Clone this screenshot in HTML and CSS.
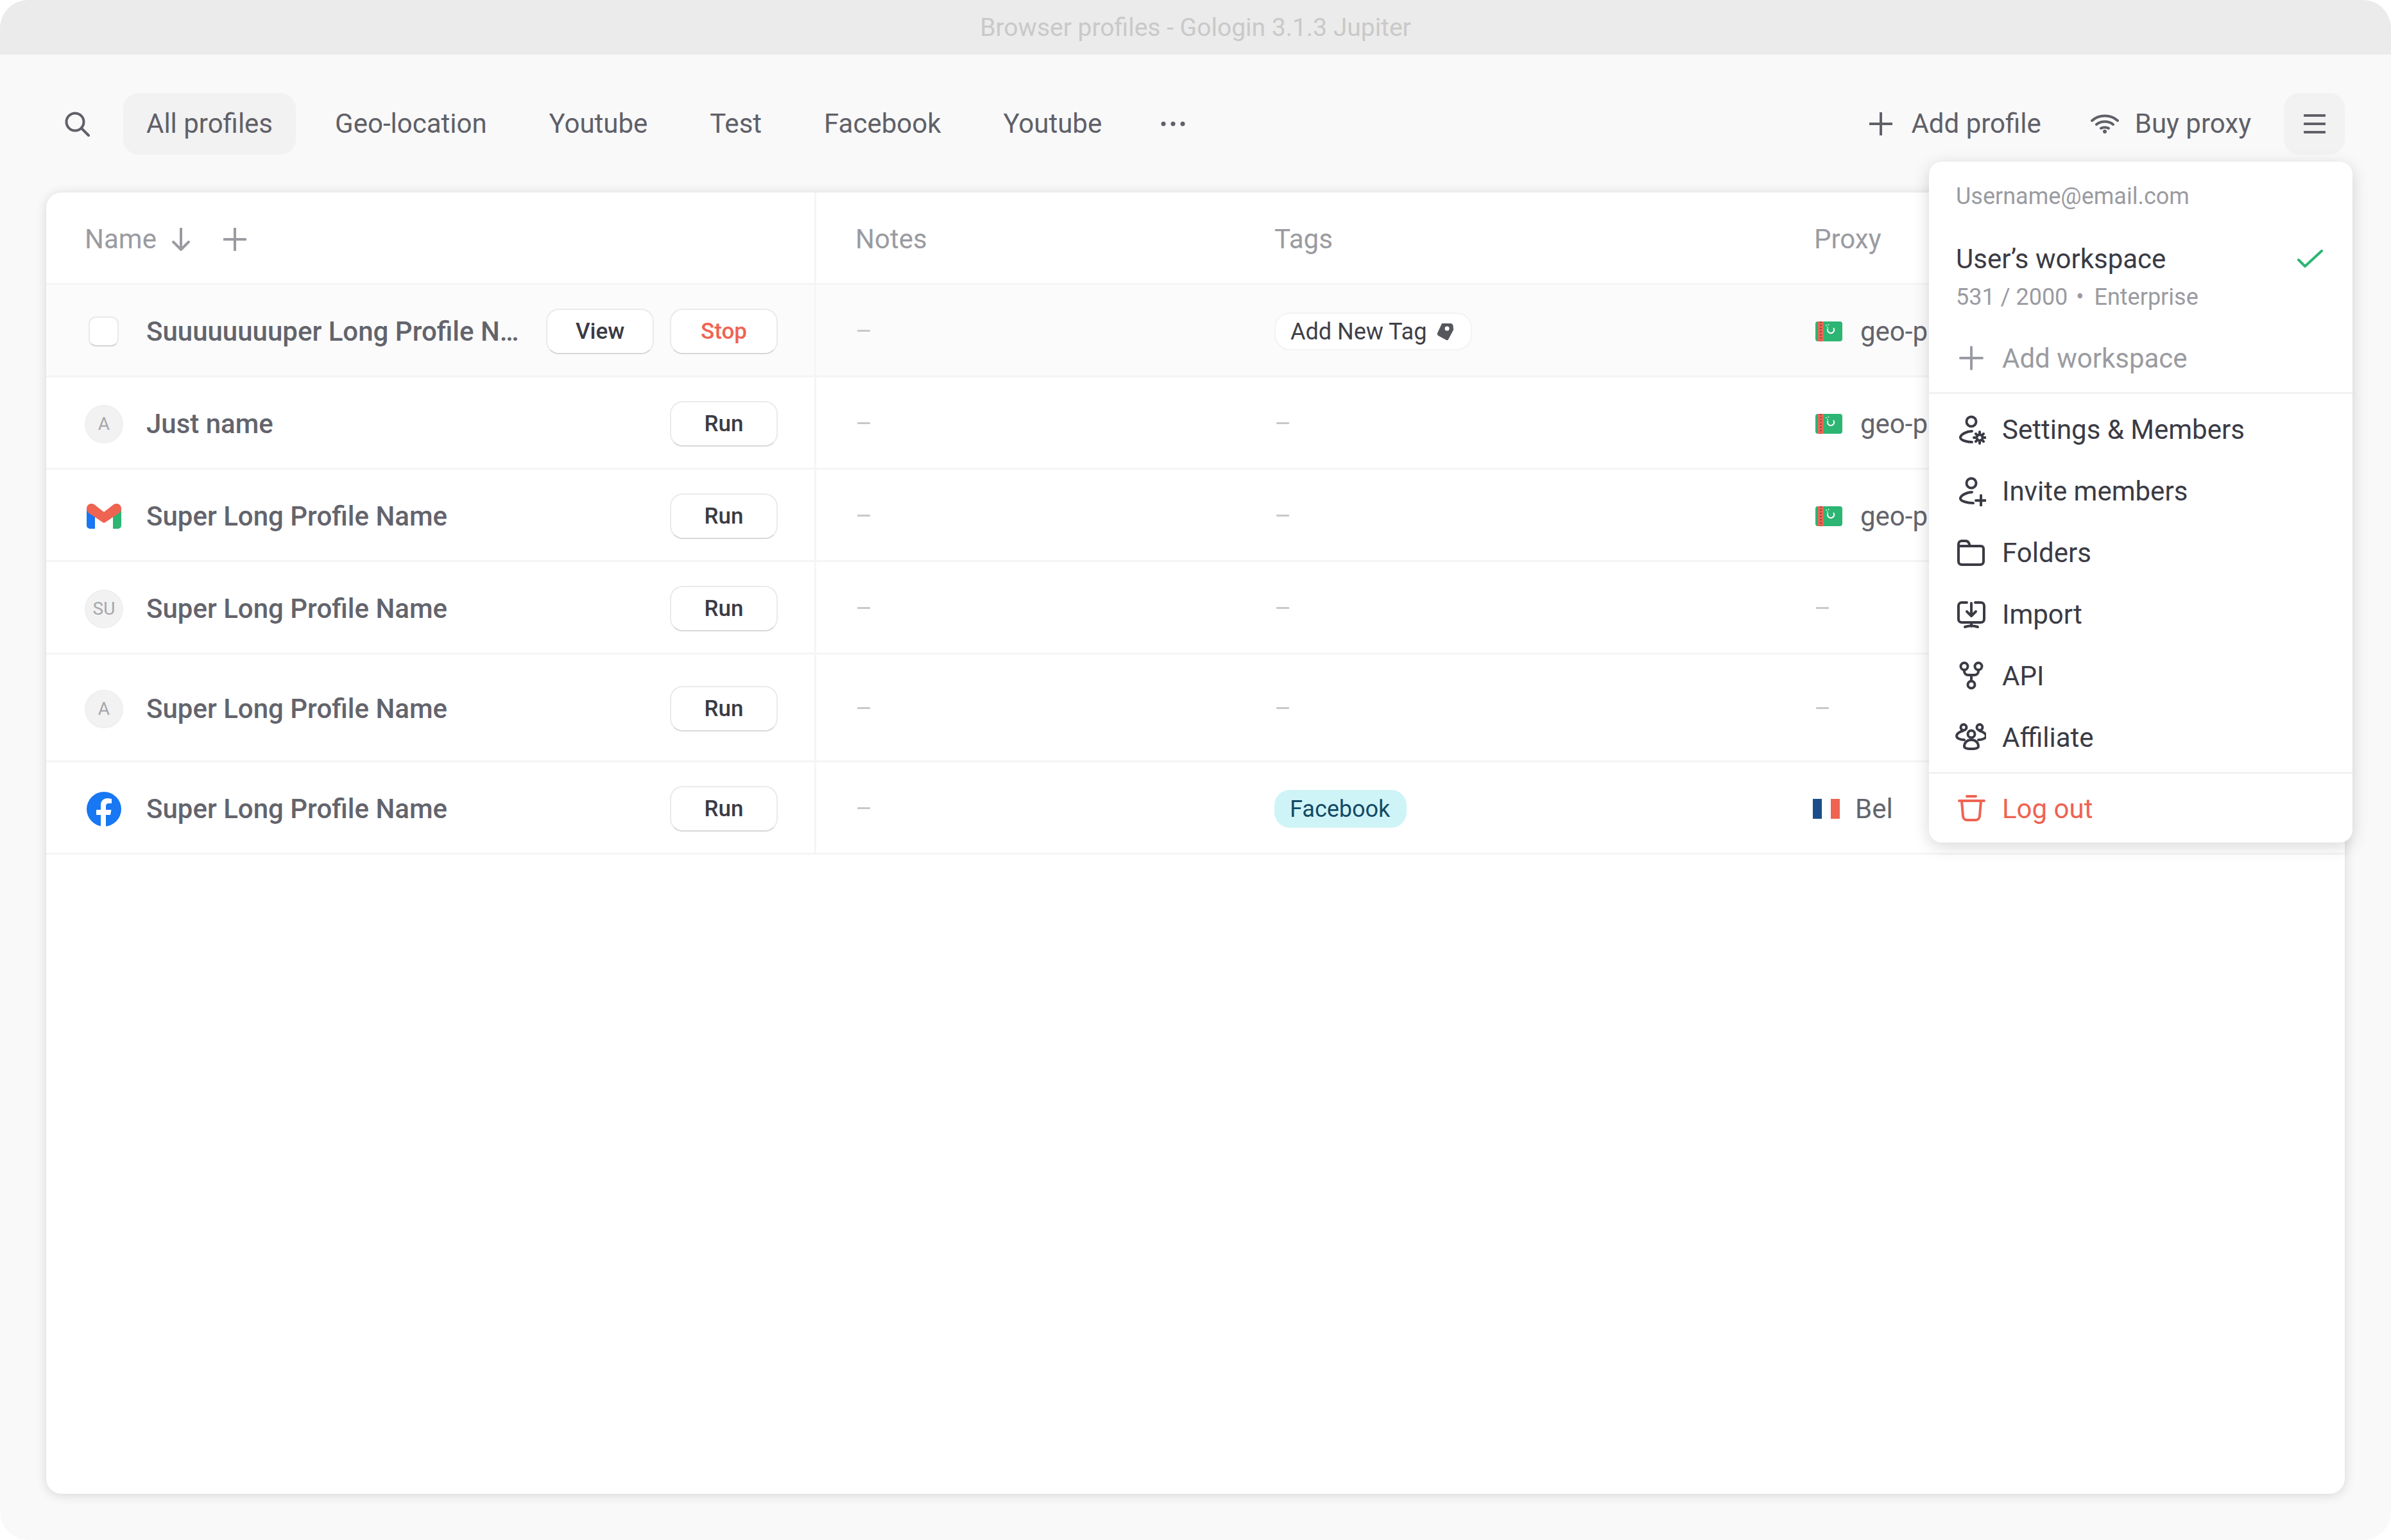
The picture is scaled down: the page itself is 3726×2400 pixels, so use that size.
FILE: index.html
```html
<!DOCTYPE html>
<html lang="en">
<head>
    <meta charset="UTF-8">
    <title>Browser profiles - Gologin 3.1.3 Jupiter</title>
    <link rel="stylesheet" href="styles.css">
</head>
<body>
<svg class="sprite">
    <symbol id="flag-tm" viewBox="0 0 42 31">
        <rect width="42" height="31" rx="4" fill="#2cb573"/>
        <rect x="4" width="9" height="31" fill="#ee6352"/>
        <path d="M8.500 0v31" stroke="#8c4a4a" stroke-width="3" stroke-dasharray="2 3"/>
        <path d="M19.500 11a5 5 0 1 0 8.500-1" fill="none" stroke="#fff" stroke-width="2"/>
        <circle cx="17" cy="6" r="1" fill="#dff3ea"/>
        <circle cx="20.500" cy="5" r="1" fill="#dff3ea"/>
        <circle cx="19" cy="9" r="1" fill="#dff3ea"/>
    </symbol>
</svg>
<div class="window">
    <div class="titlebar">Browser profiles - Gologin 3.1.3 Jupiter</div>

    <div class="toolbar">
        <svg class="search-icon" width="40" height="40" viewBox="0 0 40 40"><circle cx="17" cy="17" r="13.5"/><path d="M27 27l11 11"/></svg>
        <div class="tab active">All profiles</div>
        <div class="tab">Geo-location</div>
        <div class="tab">Youtube</div>
        <div class="tab">Test</div>
        <div class="tab">Facebook</div>
        <div class="tab">Youtube</div>
        <svg class="more-icon" width="38" height="8" viewBox="0 0 38 8"><circle cx="4" cy="4" r="3.5"/><circle cx="19" cy="4" r="3.5"/><circle cx="34" cy="4" r="3.5"/></svg>

        <div class="action add-profile">
            <svg class="line-icon" width="36" height="36" viewBox="0 0 36 36"><path d="M18 0v36M0 18h36"/></svg>
            Add profile
        </div>
        <div class="action buy-proxy">
            <svg class="line-icon" width="44" height="30" viewBox="0 0 44 30"><path d="M2 10c11-10 29-10 40 0M9 16c7-6 19-6 26 0M16 22c3-2 9-2 12 0"/><circle class="dot" cx="22" cy="27" r="3"/></svg>
            Buy proxy
        </div>
        <div class="burger">
            <svg class="line-icon" width="34" height="30" viewBox="0 0 34 30"><path d="M1 2h32M1 15h32M1 28h32"/></svg>
        </div>
    </div>

    <div class="card">
        <div class="row head">
            <div class="cell name-cell">
                <span class="head-name">Name</span>
                <svg class="head-icon" width="28" height="36" viewBox="0 0 28 36"><path d="M14 0v34M2 22l12 12 12-12"/></svg>
                <svg class="head-icon" width="36" height="36" viewBox="0 0 36 36"><path d="M18 1v34M1 18h34"/></svg>
            </div>
            <div class="cell notes-cell">Notes</div>
            <div class="cell">Tags</div>
            <div class="cell">Proxy</div>
        </div>

        <div class="row hovered">
            <div class="cell name-cell">
                <div class="check"></div>
                <div class="name">Suuuuuuuuper Long Profile N…</div>
                <button class="btn view">View</button>
                <button class="btn stop">Stop</button>
            </div>
            <div class="cell notes-cell dash">–</div>
            <div class="cell"><span class="tag add-tag">Add New Tag
                <svg width="26" height="28" viewBox="0 0 26 28"><path fill-rule="evenodd" d="M8 1h13q4 0 4.500 4l.5 6-8 15q-1 2-3 1L2 20q-2-2-1-4zm8 4.500a3.500 3.500 0 1 0 0 7 3.500 3.500 0 0 0 0-7z"/></svg>
            </span></div>
            <div class="cell proxy">
                <svg class="flag" width="42" height="31"><use href="#flag-tm"/></svg>
                geo-proxy
            </div>
        </div>

        <div class="row">
            <div class="cell name-cell">
                <div class="avatar">A</div>
                <div class="name">Just name</div>
                <button class="btn">Run</button>
            </div>
            <div class="cell notes-cell dash">–</div>
            <div class="cell dash">–</div>
            <div class="cell proxy">
                <svg class="flag" width="42" height="31"><use href="#flag-tm"/></svg>
                geo-proxy
            </div>
        </div>

        <div class="row">
            <div class="cell name-cell">
                <svg class="avatar-icon" width="60" height="60" viewBox="0 0 60 60">
                    <path d="M3 18h13v31H8a5 5 0 0 1-5-5z" fill="#1877f2"/>
                    <path d="M57 18H44v31h8a5 5 0 0 0 5-5z" fill="#2cb573"/>
                    <path d="M3 18c0-8 8-10 13-6l14 11 14-11c5-4 13-2 13 6 0 3-1 5-4 7L32 39c-1 1-3 1-4 0L7 25c-3-2-4-4-4-7z" fill="#ee6352"/>
                </svg>
                <div class="name">Super Long Profile Name</div>
                <button class="btn">Run</button>
            </div>
            <div class="cell notes-cell dash">–</div>
            <div class="cell dash">–</div>
            <div class="cell proxy">
                <svg class="flag" width="42" height="31"><use href="#flag-tm"/></svg>
                geo-proxy
            </div>
        </div>

        <div class="row">
            <div class="cell name-cell">
                <div class="avatar">SU</div>
                <div class="name">Super Long Profile Name</div>
                <button class="btn">Run</button>
            </div>
            <div class="cell notes-cell dash">–</div>
            <div class="cell dash">–</div>
            <div class="cell dash">–</div>
        </div>

        <div class="row tall">
            <div class="cell name-cell">
                <div class="avatar">A</div>
                <div class="name">Super Long Profile Name</div>
                <button class="btn">Run</button>
            </div>
            <div class="cell notes-cell dash">–</div>
            <div class="cell dash">–</div>
            <div class="cell dash">–</div>
        </div>

        <div class="row">
            <div class="cell name-cell">
                <svg class="avatar-icon" width="60" height="60" viewBox="0 0 60 60">
                    <circle cx="30" cy="30" r="27" fill="#1877f2"/>
                    <path d="M33 57V39h7l1.500-8H33v-5c0-3 1-5 5-5h4v-7c-2 0-4-1-6-1-7 0-11 4-11 11v7h-7v8h7v18z" fill="#fff"/>
                </svg>
                <div class="name">Super Long Profile Name</div>
                <button class="btn">Run</button>
            </div>
            <div class="cell notes-cell dash">–</div>
            <div class="cell"><span class="tag fb-tag">Facebook</span></div>
            <div class="cell proxy">
                <svg class="flag fr" width="42" height="31" viewBox="0 0 42 31"><rect width="14" height="31" fill="#1a4e8a"/><rect x="14" width="14" height="31" fill="#fff"/><rect x="28" width="14" height="31" fill="#ee6352"/></svg>
                Bel
            </div>
        </div>
    </div>

    <div class="menu">
        <div class="menu-email">Username@email.com</div>
        <div class="workspace">
            <div class="workspace-name">User’s workspace
                <svg class="tick" width="40" height="28" viewBox="0 0 40 28"><path d="M2 16l10 10L38 2"/></svg>
            </div>
            <div class="workspace-sub">531 / 2000<span class="sep">•</span>Enterprise</div>
        </div>
        <div class="item muted">
            <svg class="item-icon" width="48" height="48" viewBox="0 0 48 48"><path d="M25 7v34M8 24h34"/></svg>
            Add workspace
        </div>
        <div class="divider first"></div>
        <div class="item">
            <svg class="item-icon" width="48" height="48" viewBox="0 0 48 48"><circle cx="25" cy="12" r="7.500"/><path d="M26 27c-8 0-18 5-18 10 0 4 10 7 18 7"/><circle cx="38" cy="37" r="4.500"/><path d="M38 28v3M38 43v3M29 37h3M44 37h3M32 31l2 2M42 41l2 2M44 31l-2 2M34 41l-2 2"/></svg>
            Settings &amp; Members
        </div>
        <div class="item">
            <svg class="item-icon" width="48" height="48" viewBox="0 0 48 48"><circle cx="25" cy="12" r="7.500"/><path d="M26 26c-8 0-18 5-18 10 0 4 11 7 20 7M40 31v16M32 39h16"/></svg>
            Invite members
        </div>
        <div class="item">
            <svg class="item-icon" width="48" height="48" viewBox="0 0 48 48"><path d="M5 11a5 5 0 0 1 5-5h6c2 0 4 1 5 3l2 5h17a4 4 0 0 1 4 4v20a5 5 0 0 1-5 5H10a5 5 0 0 1-5-5zM5 14h18"/></svg>
            Folders
        </div>
        <div class="item">
            <svg class="item-icon" width="48" height="48" viewBox="0 0 48 48"><path d="M18 6h-8a5 5 0 0 0-5 5v21a5 5 0 0 0 5 5h30a5 5 0 0 0 5-5V11a5 5 0 0 0-5-5h-9M25 7v20M18 20l7 7 7-7M25 37v6M15 44c6-2 14-2 20 0"/></svg>
            Import
        </div>
        <div class="item">
            <svg class="item-icon" width="48" height="48" viewBox="0 0 48 48"><circle cx="14" cy="9.500" r="5.500"/><circle cx="36" cy="9.500" r="5.500"/><circle cx="25" cy="38" r="5.500"/><path d="M14 15v2a6 6 0 0 0 6 6h10a6 6 0 0 0 6-6v-2M25 23v9"/></svg>
            API
        </div>
        <div class="item">
            <svg class="item-icon" width="48" height="48" viewBox="0 0 48 48"><circle cx="13" cy="8.500" r="4.500"/><circle cx="38" cy="8.500" r="4.500"/><circle cx="25" cy="19" r="5.500"/><path d="M14 28c-5 0-12-2-12-6s6-7 10-8M36 28c5 0 12-2 12-6s-6-7-10-8M14 38c0-6 5-10 11-10s11 4 11 10c0 3-5 4-11 4s-11-1-11-4z"/></svg>
            Affiliate
        </div>
        <div class="divider second"></div>
        <div class="item danger">
            <svg class="item-icon" width="48" height="48" viewBox="0 0 48 48"><path d="M18 5h14M6 12h39M10 12l2 24a6.500 6.500 0 0 0 6.500 6h13a6.500 6.500 0 0 0 6.500-6l2-24"/></svg>
            Log out
        </div>
    </div>
</div>
</body>
</html>
```
FILE: styles.css
```css
* {
    margin: 0;
    padding: 0;
    box-sizing: border-box;
    font-family: 'Roboto', sans-serif;
}
body {
    background-color: #fff;
}
svg {
    flex-shrink: 0;
}
.sprite {
    display: none;
}
.window {
    position: relative;
    display: flex;
    flex-direction: column;
    width: 3726px;
    height: 2400px;
    background-color: #f9f9f9;
    border-radius: 44px;
    overflow: hidden;
}
.titlebar {
    height: 85px;
    line-height: 87px;
    flex-shrink: 0;
    background-color: #ebebeb;
    color: #c9c9c9;
    font-size: 39px;
    text-align: center;
}

/* top bar */
.toolbar {
    display: flex;
    align-items: center;
    gap: 25px;
    height: 215px;
    flex-shrink: 0;
    padding: 0 72px 0 100px;
    color: #5f6068;
    font-size: 42px;
}
.search-icon {
    margin-right: 27px;
    fill: none;
    stroke: #5f6068;
    stroke-width: 4;
    stroke-linecap: round;
}
.tab {
    height: 96px;
    line-height: 96px;
    padding: 0 36px;
    border-radius: 24px;
}
.tab.active {
    background-color: #f2f2f2;
}
.more-icon {
    margin-left: 31px;
    fill: #5f6068;
}
.line-icon {
    fill: none;
    stroke: #5f6068;
    stroke-width: 4;
    stroke-linecap: round;
}
.line-icon .dot {
    fill: #5f6068;
    stroke: none;
}
.action {
    display: flex;
    align-items: center;
}
.add-profile {
    gap: 29px;
    margin-left: auto;
}
.buy-proxy {
    gap: 25px;
    margin-left: 52px;
}
.burger {
    display: flex;
    align-items: center;
    justify-content: center;
    width: 95px;
    height: 96px;
    margin-left: 26px;
    background-color: #f2f2f2;
    border-radius: 24px;
}

/* table */
.card {
    flex: 1;
    margin: 0 72px 72px;
    background-color: #fff;
    border-radius: 24px;
    box-shadow: 0 2px 18px rgba(0, 0, 0, 0.14);
    overflow: hidden;
}
.row {
    display: grid;
    grid-template-columns: 1200px 714px 841px 1fr;
    height: 144px;
    border-bottom: 3px solid #f5f5f5;
    color: #63646c;
    font-size: 40px;
}
.row.head {
    color: #9a9ba1;
    font-size: 42px;
}
.row.hovered {
    background-color: #fbfbfb;
}
.row.tall {
    height: 168px;
}
.cell {
    display: flex;
    align-items: center;
    min-width: 0;
    padding-top: 4px;
    white-space: nowrap;
}
.name-cell {
    padding-right: 57px;
    padding-left: 60px;
    border-right: 3px solid #f5f5f5;
}
.notes-cell {
    padding-left: 61px;
}
.dash {
    color: #c8c8c8;
}
.head-name {
    margin-right: 24px;
}
.head-icon {
    margin-right: 52px;
    fill: none;
    stroke: #9a9ba1;
    stroke-width: 4;
    stroke-linecap: round;
    stroke-linejoin: round;
}
.head-icon + .head-icon {
    margin-right: 0;
}
.check {
    width: 47px;
    height: 47px;
    flex-shrink: 0;
    margin: 0 43px 0 6px;
    background-color: #fff;
    border: 2px solid #e9e9e9;
    border-bottom-color: #d4d4d4;
    border-radius: 12px;
}
.avatar {
    width: 60px;
    height: 60px;
    flex-shrink: 0;
    margin-right: 36px;
    background-color: #f2f2f2;
    border: 2px solid #efefef;
    border-radius: 50%;
    color: #a6a7ac;
    font-size: 28px;
    line-height: 56px;
    text-align: center;
}
.avatar-icon {
    margin-right: 36px;
}
.name {
    flex: 1;
    min-width: 0;
    font-size: 42px;
    font-weight: 500;
}
.btn {
    width: 168px;
    height: 71px;
    flex-shrink: 0;
    background-color: #fff;
    border: 2px solid #eaeaea;
    border-bottom-color: #d8d8d8;
    border-radius: 20px;
    color: #3a3b44;
    font-size: 35px;
    font-weight: 500;
}
.btn.view {
    margin-right: 25px;
}
.btn.stop {
    color: #ee6352;
}
.tag {
    display: inline-flex;
    align-items: center;
    gap: 16px;
    height: 59px;
    padding: 0 27px 0 23px;
    border-radius: 24px;
    font-size: 36px;
}
.add-tag {
    background-color: #fff;
    border: 2px solid #f3f3f3;
    color: #3f4048;
}
.add-tag svg {
    fill: #55565e;
}
.fb-tag {
    padding: 0 26px 0 24px;
    background-color: #cff4f7;
    color: #134a66;
}
.proxy {
    gap: 28px;
    padding-left: 2px;
    font-size: 42px;
}
.flag.fr {
    margin: 0 -4px 0 -4px;
}

/* account dropdown */
.menu {
    position: absolute;
    top: 252px;
    left: 3006px;
    width: 660px;
    height: 1061px;
    background-color: #fff;
    border-radius: 20px;
    box-shadow: 0 6px 26px rgba(0, 0, 0, 0.16);
    color: #3a3b44;
    font-size: 42px;
}
.menu-email {
    height: 106px;
    line-height: 108px;
    padding-left: 42px;
    color: #9a9ba1;
    font-size: 36px;
}
.workspace {
    padding: 0 46px 36px 42px;
}
.workspace-name {
    display: flex;
    align-items: center;
    justify-content: space-between;
    height: 90px;
}
.workspace-sub {
    height: 26px;
    line-height: 30px;
    color: #9a9ba1;
    font-size: 36px;
}
.sep {
    margin: 0 16px 0 13px;
}
.tick {
    fill: none;
    stroke: #2cb573;
    stroke-width: 4;
    stroke-linecap: round;
    stroke-linejoin: round;
}
.item {
    display: flex;
    align-items: center;
    gap: 25px;
    height: 96px;
    padding-left: 41px;
}
.item-icon {
    fill: none;
    stroke: #3a3b44;
    stroke-width: 4;
    stroke-linecap: round;
    stroke-linejoin: round;
}
.item.muted {
    color: #9a9ba1;
}
.item.muted .item-icon {
    stroke: #9a9ba1;
}
.item.danger {
    color: #ee6352;
}
.item.danger .item-icon {
    stroke: #ee6352;
}
.divider {
    height: 3px;
    background-color: #f2f2f2;
}
.divider.first {
    margin: 5px 0 7px;
}
.divider.second {
    margin: 6px 0;
}
```
